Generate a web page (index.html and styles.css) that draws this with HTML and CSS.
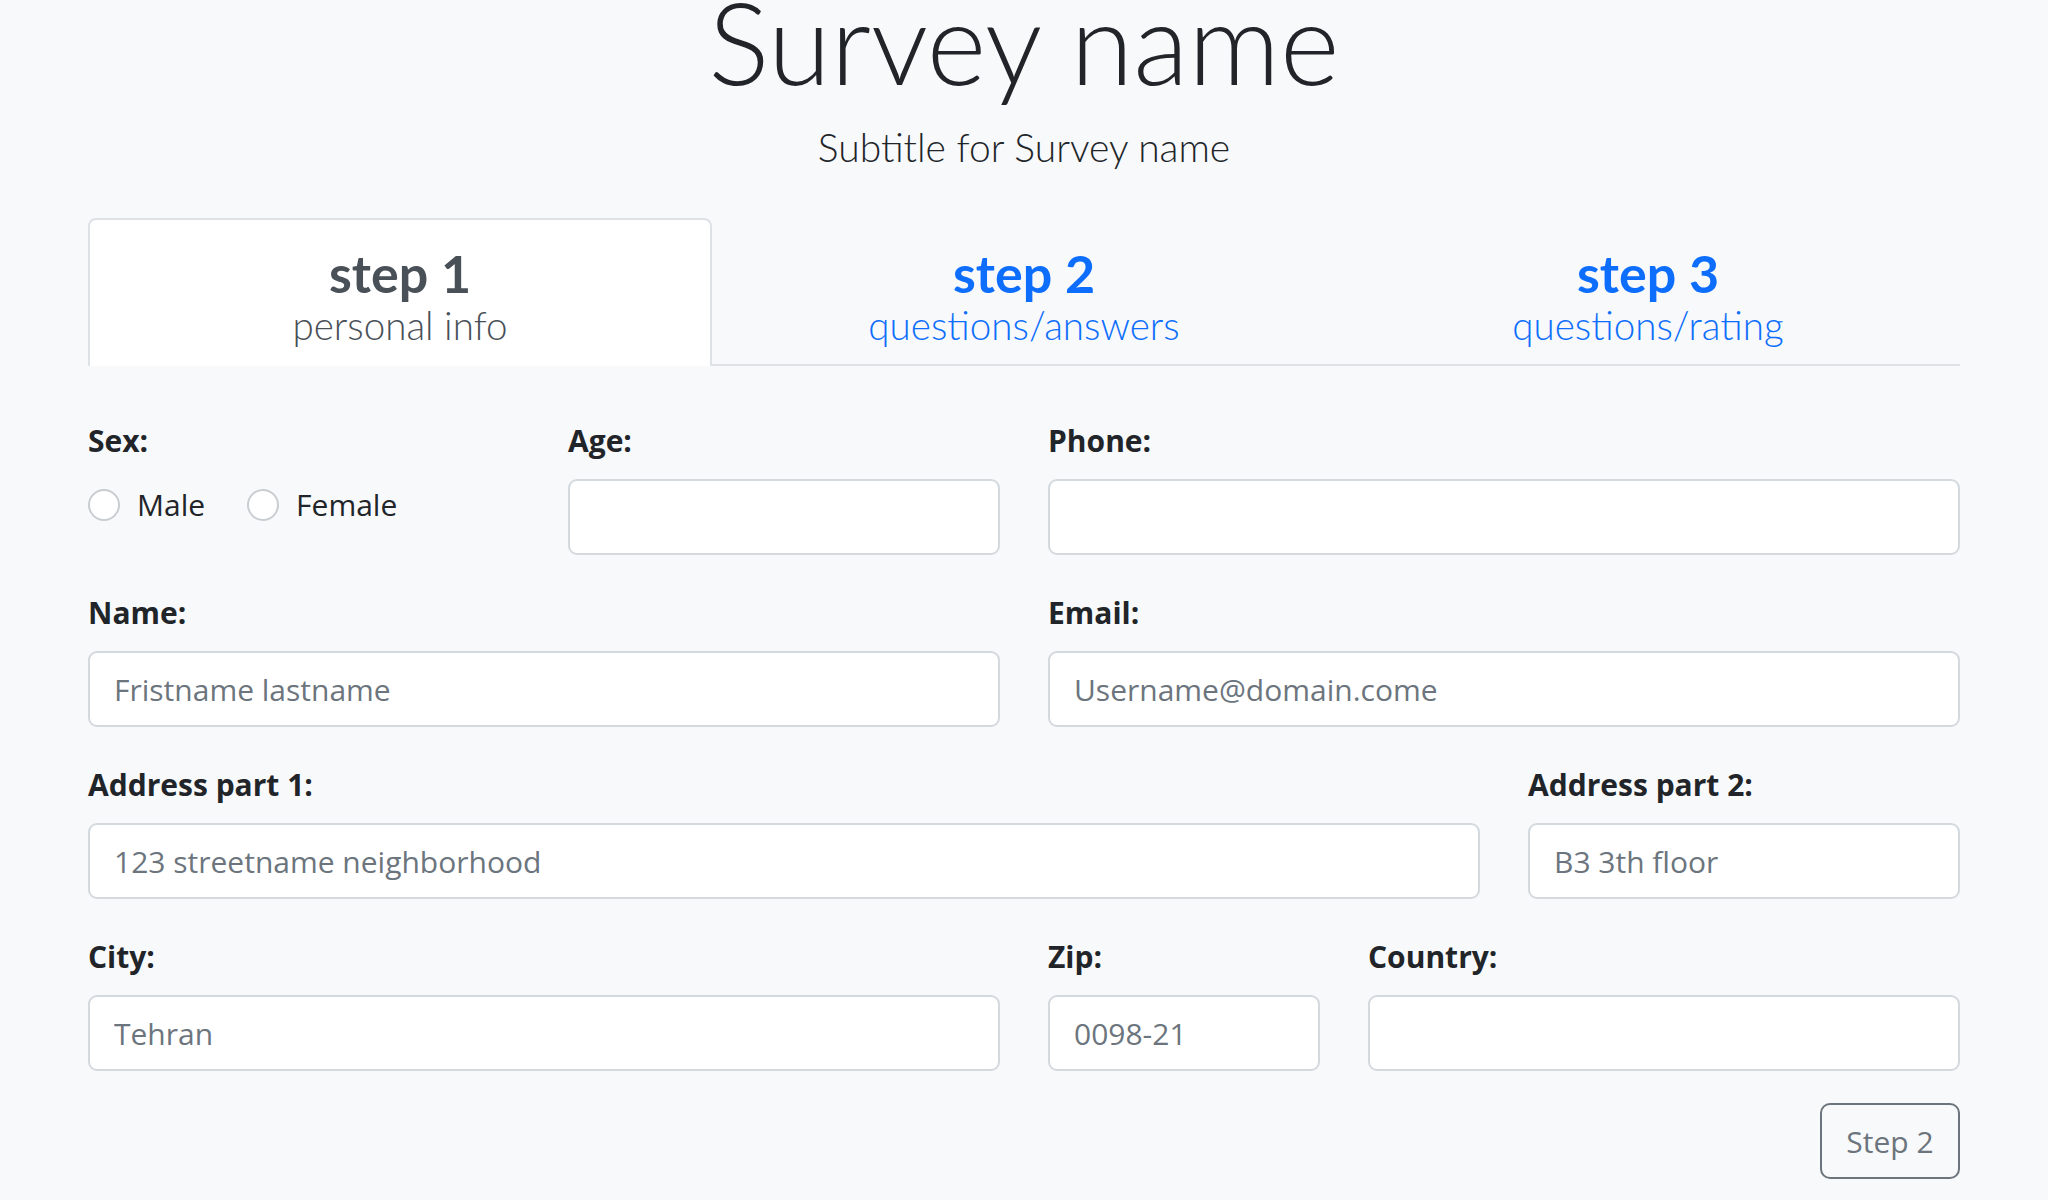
FILE: index.html
```html
<!DOCTYPE html>
<html lang="en">
<head>
<meta charset="utf-8">
<title>Survey name</title>
<link rel="stylesheet" href="styles.css">
</head>
<body>
<div class="page">
  <header class="hero">
    <h1 class="title">Survey name</h1>
    <p class="subtitle">Subtitle for Survey name</p>
  </header>

  <nav class="tabs">
    <a class="tab active" href="#"><span class="tab-step">step 1</span><span class="tab-desc">personal info</span></a>
    <a class="tab" href="#"><span class="tab-step">step 2</span><span class="tab-desc">questions/answers</span></a>
    <a class="tab" href="#"><span class="tab-step">step 3</span><span class="tab-desc">questions/rating</span></a>
  </nav>

  <form class="form">
    <div class="field c3">
      <div class="label">Sex:</div>
      <div class="radios">
        <label class="radio"><input type="radio" name="sex"><span>Male</span></label>
        <label class="radio"><input type="radio" name="sex"><span>Female</span></label>
      </div>
    </div>
    <div class="field c3">
      <label class="label" for="age">Age:</label>
      <input class="control" id="age" type="text">
    </div>
    <div class="field c6">
      <label class="label" for="phone">Phone:</label>
      <input class="control" id="phone" type="text">
    </div>

    <div class="field c6">
      <label class="label" for="name">Name:</label>
      <input class="control" id="name" type="text" placeholder="Fristname lastname">
    </div>
    <div class="field c6">
      <label class="label" for="email">Email:</label>
      <input class="control" id="email" type="text" placeholder="Username@domain.come">
    </div>

    <div class="field c9">
      <label class="label" for="addr1">Address part 1:</label>
      <input class="control" id="addr1" type="text" placeholder="123 streetname neighborhood">
    </div>
    <div class="field c3">
      <label class="label" for="addr2">Address part 2:</label>
      <input class="control" id="addr2" type="text" placeholder="B3 3th floor">
    </div>

    <div class="field c6">
      <label class="label" for="city">City:</label>
      <input class="control" id="city" type="text" placeholder="Tehran">
    </div>
    <div class="field c2">
      <label class="label" for="zip">Zip:</label>
      <input class="control" id="zip" type="text" placeholder="0098-21">
    </div>
    <div class="field c4">
      <label class="label" for="country">Country:</label>
      <input class="control" id="country" type="text">
    </div>
  </form>

  <div class="actions">
    <button class="btn" type="button">Step 2</button>
  </div>
</div>
</body>
</html>
```
FILE: styles.css
```css
* { box-sizing: border-box; }

html, body {
  margin: 0;
  padding: 0;
  background: #f8f9fa;
}

body {
  font-family: "Open Sans", "Noto Sans", sans-serif;
  color: #212529;
  font-size: 30px;
}

.page {
  width: 1872px;
  margin: 0 auto;
}

.hero {
  text-align: center;
  padding-top: 5px;
}

.title {
  margin: 0;
  font-family: "Lato", "Open Sans", sans-serif;
  font-size: 114px;
  font-weight: 300;
  line-height: 72px;
  color: #212529;
}

.subtitle {
  margin: 47px 0 48px;
  font-family: "Lato", "Open Sans", sans-serif;
  font-size: 39px;
  font-weight: 300;
  line-height: 46px;
}

.tabs {
  display: flex;
  border-bottom: 2px solid #dee2e6;
}

.tab {
  flex: 1 1 0;
  display: flex;
  flex-direction: column;
  align-items: center;
  padding: 23px 0 16px;
  border: 2px solid transparent;
  border-bottom: none;
  margin-bottom: -2px;
  border-radius: 8px 8px 0 0;
  text-decoration: none;
  color: #0d6efd;
  font-family: "Lato", "Open Sans", sans-serif;
}

.tab.active {
  background: #fff;
  border-color: #dee2e6;
  color: #495057;
  padding-bottom: 18px;
}

.tab-step {
  font-size: 52px;
  font-weight: 700;
  line-height: 60px;
}

.tab-desc {
  font-size: 38.6px;
  font-weight: 300;
  line-height: 45px;
}

.form {
  display: grid;
  grid-template-columns: repeat(12, 1fr);
  column-gap: 48px;
  row-gap: 35px;
  padding-top: 52px;
}

.c2 { grid-column: span 2; }
.c3 { grid-column: span 3; }
.c4 { grid-column: span 4; }
.c6 { grid-column: span 6; }
.c9 { grid-column: span 9; }

.field {
  display: flex;
  flex-direction: column;
}

.label {
  display: block;
  font-size: 30px;
  font-weight: 700;
  line-height: 45px;
  margin-bottom: 16px;
  color: #212529;
}

.control {
  display: block;
  width: 100%;
  height: 76px;
  padding: 0 24px;
  font-family: inherit;
  font-size: 30px;
  color: #212529;
  background: #fff;
  border: 2px solid #d4d9de;
  border-radius: 9px;
  outline: none;
}

.control::placeholder {
  color: #6c757d;
  opacity: 1;
}

.radios {
  display: flex;
  align-items: center;
  gap: 42px;
  margin-top: 3px;
}

.radio {
  display: flex;
  align-items: center;
  gap: 17px;
  line-height: 45px;
  font-size: 30px;
}

.radio input {
  appearance: none;
  -webkit-appearance: none;
  width: 32px;
  height: 32px;
  margin: 0;
  border: 2px solid #c8cdd2;
  border-radius: 50%;
  background: #fff;
}

.actions {
  display: flex;
  justify-content: flex-end;
  margin-top: 32px;
}

.btn {
  width: 140px;
  height: 76px;
  font-family: inherit;
  font-size: 30px;
  color: #6c757d;
  background: transparent;
  border: 2px solid #6c757d;
  border-radius: 10px;
}
```
